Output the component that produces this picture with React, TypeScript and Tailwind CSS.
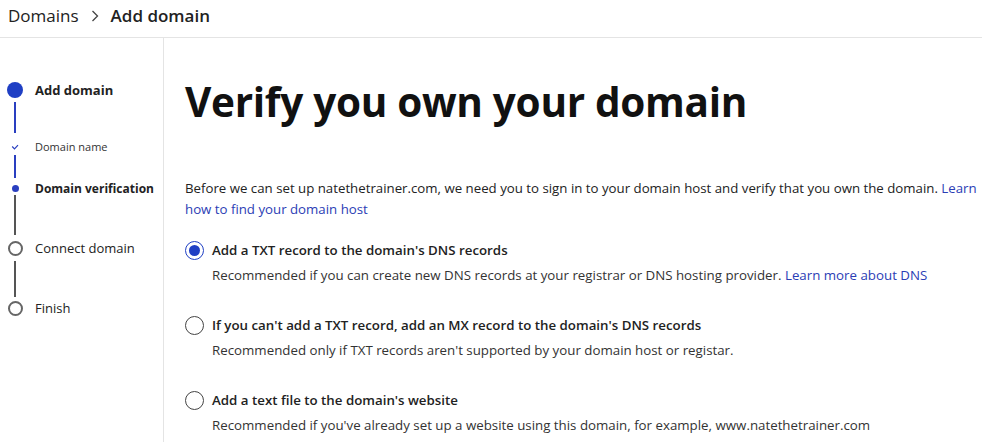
import React from "react";

const font = { fontFamily: '"Open Sans", "Noto Sans", sans-serif' };

function Radio({ checked }: { checked?: boolean }) {
  return checked ? (
    <span className="flex h-[19px] w-[19px] shrink-0 items-center justify-center rounded-full border-[1.5px] border-[#1f3fc4]">
      <span className="h-[11px] w-[11px] rounded-full bg-[#1f3fc4]" />
    </span>
  ) : (
    <span className="h-[19px] w-[19px] shrink-0 rounded-full border-[1.5px] border-[#444]" />
  );
}

function Option({ checked, title, desc }: { checked?: boolean; title: string; desc: React.ReactNode }) {
  return (
    <div className="flex flex-col">
      <div className="flex items-center gap-[8px]">
        <Radio checked={checked} />
        <span className="text-[13.3px] font-semibold text-[#222]">{title}</span>
      </div>
      <div className="mt-[5px] pl-[27px] text-[13.3px] text-[#333]">{desc}</div>
    </div>
  );
}

function Step({ marker, label, className, mt }: { marker: React.ReactNode; label: React.ReactNode; className?: string; mt: string }) {
  return (
    <div className={`flex items-center ${mt}`}>
      <div className="flex w-[30px] justify-center">{marker}</div>
      <div className={`ml-[5px] whitespace-nowrap text-[#222] ${className ?? ""}`}>{label}</div>
    </div>
  );
}

function Connector({ color, h, mt }: { color: string; h: string; mt: string }) {
  return (
    <div className={`flex w-[30px] justify-center ${mt}`}>
      <span className={`w-[2px] ${h} ${color}`} />
    </div>
  );
}

export default function App() {
  return (
    <div className="flex h-[442px] w-[982px] flex-col overflow-hidden bg-white" style={font}>
      <div className="flex h-[38px] shrink-0 items-center gap-[10px] border-b border-[#e4e4e4] pb-[6px] pl-[8px] text-[17px] text-[#222]">
        <span>Domains</span>
        <svg width="12" height="14" viewBox="0 0 12 14">
          <path d="M3.5 2 L8.5 7 L3.5 12" fill="none" stroke="#444" strokeWidth="1.3" />
        </svg>
        <span className="font-semibold">Add domain</span>
      </div>
      <div className="flex flex-1">
        <div className="flex w-[164px] shrink-0 flex-col border-r border-[#e4e4e4] pt-[44px]">
          <Step
            mt="mt-0"
            marker={<span className="h-[16px] w-[16px] rounded-full bg-[#1f3fc4]" />}
            label="Add domain"
            className="h-[16px] text-[13px] font-bold leading-[16px]"
          />
          <Connector mt="mt-[4px]" h="h-[31px]" color="bg-[#2a3fc0]" />
          <Step
            mt="mt-[10px]"
            marker={
              <svg width="8" height="8" viewBox="0 0 8 8">
                <path d="M1.2 3.5 L3.5 5.8 L7 2.2" fill="none" stroke="#2a3fc0" strokeWidth="1.2" />
              </svg>
            }
            label="Domain name"
            className="h-[8px] text-[11px] leading-[8px] text-[#333]"
          />
          <Connector mt="mt-[4px]" h="h-[23px]" color="bg-[#2a3fc0]" />
          <Step
            mt="mt-[7px]"
            marker={<span className="h-[7px] w-[7px] rounded-full bg-[#2a3fc0]" />}
            label="Domain verification"
            className="h-[7px] text-[12px] font-bold leading-[7px]"
          />
          <Connector mt="mt-[3px]" h="h-[40px]" color="bg-[#555]" />
          <Step
            mt="mt-[6px]"
            marker={<span className="h-[15px] w-[15px] rounded-full border-2 border-[#666]" />}
            label="Connect domain"
            className="h-[15px] text-[13px] leading-[15px]"
          />
          <Connector mt="mt-[5px]" h="h-[36px]" color="bg-[#555]" />
          <Step
            mt="mt-[4px]"
            marker={<span className="h-[15px] w-[15px] rounded-full border-2 border-[#666]" />}
            label="Finish"
            className="h-[15px] text-[13px] leading-[15px]"
          />
        </div>
        <div className="flex-1 pl-[21px] pt-[38px]">
          <h1 className="text-[40.5px] font-bold leading-[52px] tracking-[-0.3px] text-[#111]">Verify you own your domain</h1>
          <p className="mt-[50px] pr-[4px] text-[13.25px] leading-[21px] text-[#222]">
            Before we can set up natethetrainer.com, we need you to sign in to your domain host and verify that you own the domain.{" "}
            <span className="text-[#2b3db5]">Learn how to find your domain host</span>
          </p>
          <div className="mt-[21px] flex flex-col gap-[30px]">
            <Option
              checked
              title="Add a TXT record to the domain's DNS records"
              desc={
                <>
                  Recommended if you can create new DNS records at your registrar or DNS hosting provider.{" "}
                  <span className="text-[#2b3db5]">Learn more about DNS</span>
                </>
              }
            />
            <Option
              title="If you can't add a TXT record, add an MX record to the domain's DNS records"
              desc="Recommended only if TXT records aren't supported by your domain host or registar."
            />
            <Option
              title="Add a text file to the domain's website"
              desc="Recommended if you've already set up a website using this domain, for example, www.natethetrainer.com"
            />
          </div>
        </div>
      </div>
    </div>
  );
}
